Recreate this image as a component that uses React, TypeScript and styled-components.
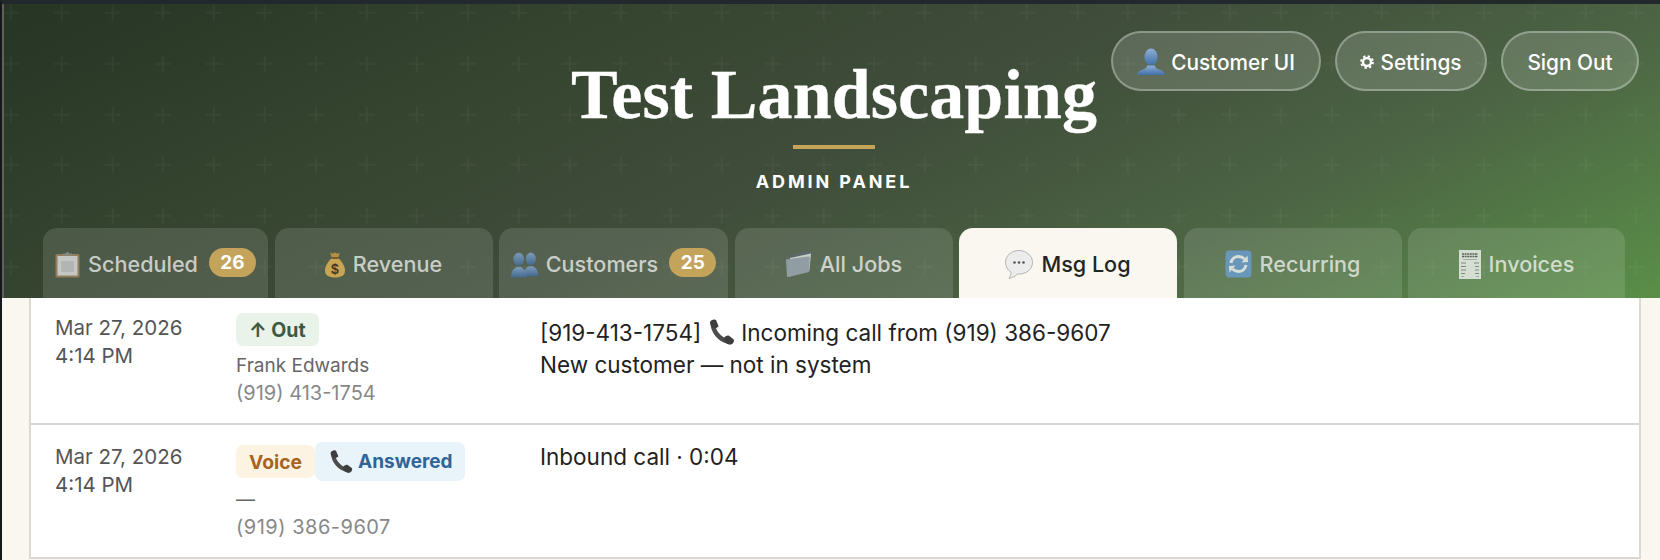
import React from "react";
import styled, { createGlobalStyle } from "styled-components";

const plusTile = `url("data:image/svg+xml,%3Csvg xmlns='http://www.w3.org/2000/svg' width='50.8' height='50.8'%3E%3Cpath d='M10.7 4.7v16M2.7 12.7h16' stroke='%23ffffff' stroke-opacity='.036' stroke-width='2' fill='none'/%3E%3C/svg%3E")`;

const Global = createGlobalStyle`
  html, body { margin: 0; padding: 0; height: 560px; overflow: hidden; background: #faf6f0; }
  body { font-family: "Inter", "Liberation Sans", sans-serif; }
  * { box-sizing: border-box; }
`;

const Frame = styled.div`
  height: 560px;
  overflow: hidden;
  border-top: 4px solid #22282b;
  border-left: 2px solid #15181a;
  background: #faf6f0;
`;

const Header = styled.header`
  position: relative;
  height: 294px;
  border-left: 2px solid #5d635b;
  padding-left: 4px;
  background-image: ${plusTile},
    linear-gradient(155deg, #263524 0%, #35442f 27%, #3f4d3a 50%, #4c6444 74%, #5a8f48 100%);
  background-position: -4px -4px, 0 0;
  display: flex;
  flex-direction: column;
  align-items: center;
`;

const Title = styled.h1`
  margin: 56px 0 0;
  height: 70px;
  font-family: "Liberation Serif", "Noto Serif", serif;
  font-weight: 700;
  font-size: 70px;
  line-height: 70px;
  letter-spacing: 0.1px;
  color: #fff;
  -webkit-text-stroke: 0.3px #fff;
`;

const Rule = styled.div`
  width: 82px;
  height: 4px;
  margin-top: 15px;
  background: #c4a35a;
`;

const Subtitle = styled.div`
  margin-top: 22px;
  font-size: 18px;
  line-height: 22px;
  font-weight: 700;
  letter-spacing: 2.9px;
  color: #fff;
`;

const Actions = styled.div`
  position: absolute;
  top: 27px;
  right: 21px;
  display: flex;
  gap: 14px;
`;

const PillButton = styled.button<{ $w: number }>`
  width: ${(p) => p.$w}px;
  height: 60px;
  border-radius: 30px;
  border: 2px solid rgba(255, 255, 255, 0.3);
  background: rgba(255, 255, 255, 0.15);
  color: #fff;
  font-family: inherit;
  font-size: 20.8px;
  font-weight: 500;
  display: flex;
  align-items: center;
  justify-content: center;
  gap: 6px;
  padding: 2px 0 0;
`;

const Tabs = styled.nav`
  margin-top: auto;
  width: 100%;
  padding-left: 35px;
  display: flex;
  gap: 6.5px;
`;

const Tab = styled.div<{ $w: number; $active?: boolean }>`
  width: ${(p) => p.$w}px;
  height: 70px;
  border-radius: 14px 14px 0 0;
  background: ${(p) => (p.$active ? "#faf6f0" : "rgba(255,255,255,0.12)")};
  color: ${(p) => (p.$active ? "#1e261e" : "rgba(255,255,255,0.7)")};
  font-size: 21.6px;
  font-weight: 500;
  display: flex;
  align-items: center;
  justify-content: center;
  gap: 8px;
  padding-top: 2px;
`;

const TabIcon = styled.span<{ $active?: boolean }>`
  display: flex;
  opacity: ${(p) => (p.$active ? 1 : 0.75)};
`;

const Count = styled.span`
  margin-left: 3px;
  min-width: 47px;
  height: 29px;
  margin-top: -4px;
  padding: 0 10px;
  border-radius: 15px;
  background: #c4a35a;
  color: #fff;
  font-size: 19px;
  font-weight: 700;
  display: flex;
  align-items: center;
  justify-content: center;
`;

const Card = styled.main`
  margin: 0 19px 0 27px;
  background: #fff;
  border-left: 2px solid #dcd8d2;
  border-right: 2px solid #dcd8d2;
`;

const Row = styled.section<{ $first?: boolean; $h: number }>`
  height: ${(p) => p.$h}px;
  padding: ${(p) => (p.$first ? "16px" : "18px")} 24px 0;
  display: grid;
  grid-template-columns: 181px 304px 1fr;
  border-bottom: 2px solid #d9d6d1;
`;

const DateCell = styled.div`
  font-size: 20.5px;
  line-height: 28px;
  color: #555;
`;

const TypeCell = styled.div`
  margin-top: -1px;
  display: flex;
  flex-direction: column;
  align-items: flex-start;
`;

const Badges = styled.div`
  display: flex;
  align-items: center;
`;

const Tag = styled.span<{ $bg: string; $fg: string; $h: number; $size?: number; $pad?: number }>`
  height: ${(p) => p.$h}px;
  padding: 0 ${(p) => p.$pad ?? 12}px;
  border-radius: 7px;
  background: ${(p) => p.$bg};
  color: ${(p) => p.$fg};
  font-size: ${(p) => p.$size ?? 19}px;
  font-weight: 700;
  display: inline-flex;
  align-items: center;
  gap: 4px;
  white-space: nowrap;
`;

const Name = styled.div<{ $mt: number }>`
  margin-top: ${(p) => p.$mt}px;
  font-size: 19px;
  line-height: 28px;
  color: #666;
`;

const Phone = styled.div<{ $ls?: number }>`
  font-size: 20px;
  line-height: 27px;
  letter-spacing: ${(p) => p.$ls ?? 0}px;
  color: #888;
`;

const Message = styled.div<{ $shift: number }>`
  margin-top: ${(p) => p.$shift}px;
  font-size: 22.5px;
  color: #222;
`;

const MsgLine = styled.div`
  display: flex;
  align-items: center;
  gap: 5px;
  height: 32.5px;
`;

const Handset = ({ s = 30 }: { s?: number }) => (
  <svg width={s} height={s} viewBox="0 0 30 30">
    <path d="M7 5C6 14 14 24 25 25" fill="none" stroke="#4c4c4c" strokeWidth="4.5" />
    <path d="M4 5.5C4 3 9 1.5 10 3l2.5 6c.4 1-3.600 3-5 2.200C5.500 10 4 8 4 5.500Z" fill="#3e3e3e" />
    <path d="M18 21c1-1.800 3.500-3 5-2.200l4.500 3.500c1 1 .2 4.500-2.500 5.200-2 .4-4-.5-5.500-2-1.200-1.300-2-3.200-1.500-4.500Z" fill="#3e3e3e" />
  </svg>
);

const Clipboard = () => (
  <svg width="25" height="27" viewBox="0 0 25 27">
    <rect x="0.500" y="3" width="24" height="23.500" rx="1.500" fill="#a98a63" />
    <rect x="2.500" y="5" width="20" height="19.500" fill="#ececec" />
    <rect x="6" y="10" width="13" height="11" fill="#d4d4d4" />
    <path d="M8 4.500h9V2.500h-3c0-2-3-2-3 0H8Z" fill="#9a9a9a" />
  </svg>
);

const MoneyBag = () => (
  <svg width="20" height="27" viewBox="0 0 20 27">
    <path d="M5 1.500l2.500 1.200L10 1.500l2.500 1.200L15 1.500 13 7H7Z" fill="#d9a441" />
    <path d="M7 7h6c4 3.500 7 8 7 12.500C20 24.500 16 26.500 10 26.500S0 24.500 0 19.500C0 15 3 10.500 7 7Z" fill="#f0bd55" />
    <rect x="6.500" y="6" width="7" height="2" rx="1" fill="#7d5a2b" />
    <text x="10" y="22.500" textAnchor="middle" fontSize="14" fontWeight="700" fontFamily="Liberation Sans, sans-serif" fill="#3a2c17">$</text>
  </svg>
);

const BustShape = ({ x, scale, id }: { x: number; scale: number; id: string }) => (
  <g transform={`translate(${x} 0) scale(${scale})`}>
    <ellipse cx="7" cy="7.500" rx="4.800" ry="6" fill={`url(#${id})`} />
    <path d="M0 24c0-6 2.500-8 5-9.500h4c2.500 1.500 5 3.500 5 9.500Z" fill={`url(#${id})`} />
  </g>
);

const Busts = () => (
  <svg width="27" height="27" viewBox="0 0 27 27">
    <defs>
      <linearGradient id="bustg" x1="0" y1="0" x2="0" y2="1">
        <stop offset="0" stopColor="#8bb0dc" />
        <stop offset="1" stopColor="#3e6ca3" />
      </linearGradient>
    </defs>
    <BustShape x={12.500} scale={1.050} id="bustg" />
    <BustShape x={0} scale={1.100} id="bustg" />
  </svg>
);

const Folder = () => (
  <svg width="27" height="28" viewBox="0 0 27 28">
    <path d="M1 8L8 5.500l1-2L21 1.500l5.500-.5L25 6 4 26Z" fill="#5f6874" />
    <path d="M5 8L26 3.500 24.500 20 5 24Z" fill="#eceff2" />
    <path d="M1 9.500l22-3c1.200-.1 1.800.5 1.800 1.500l-.6 14-20.700 5c-1 .2-1.500-.2-1.600-1.200Z" fill="#a2aebc" />
  </svg>
);

const Speech = () => (
  <svg width="28" height="29" viewBox="0 0 28 29">
    <path d="M14 .5C6.500.5.500 5.500.500 12.500c0 4 2.200 7.500 5.500 9.700.2 2-.8 4.500-2 6.300 3-.5 6.500-2.500 8.500-4.500h1.500c7.500 0 13.500-5 13.500-11.500S21.500.5 14 .5Z" fill="#ececec" stroke="#b4b4b4" />
    <circle cx="9.500" cy="12.500" r="1.300" fill="#555" />
    <circle cx="14" cy="12.500" r="1.300" fill="#555" />
    <circle cx="18.500" cy="12.500" r="1.300" fill="#555" />
  </svg>
);

const Recur = () => (
  <svg width="27" height="28" viewBox="0 0 27 28">
    <rect x="0.500" y="0.500" width="26" height="27" rx="4" fill="#6ba0dc" />
    <path d="M6 13c.6-4 4-6.500 7.500-6.500 2.500 0 4.500 1 6 2.500" fill="none" stroke="#fff" strokeWidth="3" />
    <path d="M16.500 12.500l6.500-.5-.5-6.500Z" fill="#fff" />
    <path d="M21 15c-.6 4-4 6.500-7.500 6.500-2.500 0-4.500-1-6-2.500" fill="none" stroke="#fff" strokeWidth="3" />
    <path d="M10.500 15.500l-6.500.5.5 6.500Z" fill="#fff" />
  </svg>
);

const Receipt = () => (
  <svg width="22" height="29" viewBox="0 0 22 29">
    <rect width="22" height="29" fill="#fafafa" />
    <path d="M3 4h16M3 6.500h16" stroke="#555" strokeWidth="1.600" strokeDasharray="2 .6" />
    <path d="M4 9.500h14" stroke="#bbb" />
    <path d="M2 13h5M15 13h5M2 16.500h5M16 16.500h4M2 20h5M16 20h4M2 23.500h4M16 23.500h4" stroke="#888" strokeWidth="1.200" />
    <path d="M2 26.500h3M17 26.500h3" stroke="#bbb" />
  </svg>
);

const Bust = () => (
  <svg width="28" height="30" viewBox="0 0 28 30">
    <defs>
      <linearGradient id="oneg" x1="0" y1="0" x2="0" y2="1">
        <stop offset="0" stopColor="#8fb0d6" />
        <stop offset="1" stopColor="#3f6fa8" />
      </linearGradient>
    </defs>
    <ellipse cx="14" cy="10" rx="6.500" ry="8.500" fill="url(#oneg)" />
    <path d="M0 28c.5-3 3-4.500 6-5.500 2.500-.8 4-1.800 4-4h8c0 2.200 1.500 3.200 4 4 3 1 5.500 2.500 6 5.500Z" fill="url(#oneg)" />
  </svg>
);

const Gear = () => (
  <svg width="14" height="14" viewBox="0 0 14 14">
    <circle cx="7" cy="7" r="4" fill="none" stroke="#fff" strokeWidth="2.400" />
    <circle cx="7" cy="7" r="5.900" fill="none" stroke="#fff" strokeWidth="2" strokeDasharray="2.300 2.330" />
  </svg>
);

const tabs: { label: string; w: number; icon: React.ReactNode; count?: number; active?: boolean }[] = [
  { label: "Scheduled", w: 225, icon: <Clipboard />, count: 26 },
  { label: "Revenue", w: 218, icon: <MoneyBag /> },
  { label: "Customers", w: 229, icon: <Busts />, count: 25 },
  { label: "All Jobs", w: 218, icon: <Folder /> },
  { label: "Msg Log", w: 218, icon: <Speech />, active: true },
  { label: "Recurring", w: 218, icon: <Recur /> },
  { label: "Invoices", w: 217, icon: <Receipt /> },
];

export default function App() {
  return (
    <Frame>
      <Global />
      <Header>
        <Title>Test Landscaping</Title>
        <Rule />
        <Subtitle>ADMIN PANEL</Subtitle>
        <Actions>
          <PillButton $w={210}>
            <Bust />
            Customer UI
          </PillButton>
          <PillButton $w={152}>
            <Gear />
            Settings
          </PillButton>
          <PillButton $w={138}>Sign Out</PillButton>
        </Actions>
        <Tabs>
          {tabs.map((t) => (
            <Tab key={t.label} $w={t.w} $active={t.active}>
              <TabIcon $active={t.active}>{t.icon}</TabIcon>
              {t.label}
              {t.count !== undefined && <Count>{t.count}</Count>}
            </Tab>
          ))}
        </Tabs>
      </Header>
      <Card>
        <Row $first $h={127}>
          <DateCell>
            Mar 27, 2026
            <br />
            4:14 PM
          </DateCell>
          <TypeCell>
            <Tag $bg="#e9f3e9" $fg="#3d5a40" $h={33} $size={19.5} $pad={13}>
              ↑ Out
            </Tag>
            <Name $mt={6}>Frank Edwards</Name>
            <Phone>(919) 413-1754</Phone>
          </TypeCell>
          <Message $shift={2}>
            <MsgLine>
              [919-413-1754]
              <Handset />
              Incoming call from (919) 386-9607
            </MsgLine>
            <MsgLine>New customer — not in system</MsgLine>
          </Message>
        </Row>
        <Row $h={134}>
          <DateCell>
            Mar 27, 2026
            <br />
            4:14 PM
          </DateCell>
          <TypeCell>
            <Badges>
              <Tag $bg="#fdf3e3" $fg="#a8641f" $h={33} $size={19.3} $pad={13}>
                Voice
              </Tag>
              <Tag $bg="#e8f3fa" $fg="#2f6599" $h={39}>
                <Handset s={27} />
                Answered
              </Tag>
            </Badges>
            <Name $mt={5}>—</Name>
            <Phone $ls={0.5}>(919) 386-9607</Phone>
          </TypeCell>
          <Message $shift={-3}>
            <MsgLine>Inbound call · 0:04</MsgLine>
          </Message>
        </Row>
      </Card>
    </Frame>
  );
}
